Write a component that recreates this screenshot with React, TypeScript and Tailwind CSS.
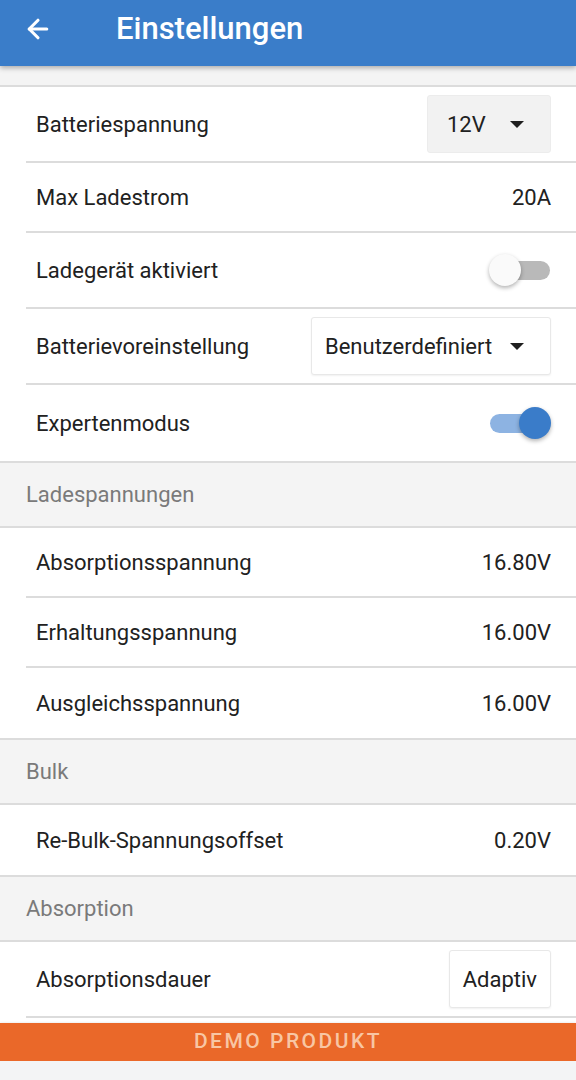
import { ArrowLeft } from 'lucide-react';

const font = { fontFamily: 'Roboto, "Noto Sans", sans-serif' };

function Caret() {
    return (
        <svg width="16" height="9" viewBox="0 0 16 9" className="ml-auto">
            <path d="M1 1h14L8 8z" fill="#1f1f1f" />
        </svg>
    );
}

function Toggle({ on }: { on: boolean }) {
    if (on) {
        return (
            <div className="relative w-[62px] h-[34px] flex items-center">
                <div className="w-[58px] h-[19px] rounded-full bg-[#8db3e2] ml-[1px]" />
                <div className="absolute right-0 top-[1px] w-[32px] h-[32px] rounded-full bg-[#3a7cc9] shadow-[0_2px_4px_rgba(0,0,0,0.3)]" />
            </div>
        );
    }
    return (
        <div className="relative w-[62px] h-[34px] flex items-center">
            <div className="w-[58px] h-[19px] rounded-full bg-[#b9b9b9] ml-[3px]" />
            <div className="absolute left-0 top-[1px] w-[32px] h-[32px] rounded-full bg-[#fafafa] shadow-[0_2px_4px_rgba(0,0,0,0.3)]" />
        </div>
    );
}

function Row({ label, children, tall, last }: { label: string; children: React.ReactNode; tall?: boolean; last?: boolean }) {
    return (
        <div className="bg-white shrink-0">
            <div
                className={`ml-[26px] pl-[10px] pr-[25px] flex items-center justify-between ${tall ? 'h-[76px]' : 'h-[70px]'} ${last ? '' : 'border-b-2 border-[#dcdcdc]'}`}
            >
                <span className="text-[22px] text-[#212121]">{label}</span>
                {children}
            </div>
        </div>
    );
}

function Section({ title }: { title: string }) {
    return (
        <div className="h-[67px] shrink-0 bg-[#f4f4f4] border-y-2 border-[#dcdcdc] flex items-center pl-[26px]">
            <span className="text-[22px] text-[#7a7a7a]">{title}</span>
        </div>
    );
}

function Value({ children }: { children: React.ReactNode }) {
    return <span className="text-[22px] text-[#212121]">{children}</span>;
}

export default function App() {
    return (
        <div style={font} className="w-[576px] h-[1080px] bg-white overflow-hidden flex flex-col relative">
            <div className="h-[66px] bg-[#3a7dc9] flex items-center pb-[8px] shrink-0 relative z-10 shadow-[0_2px_5px_rgba(0,0,0,0.3)]">
                <ArrowLeft size={30} strokeWidth={2.5} className="text-white ml-[23px]" />
                <h1 className="ml-[63px] text-[31px] font-medium text-white">Einstellungen</h1>
            </div>
            <div className="h-[21px] bg-[#f4f4f4] border-b-2 border-[#dcdcdc] shrink-0" />

            <Row label="Batteriespannung" tall>
                <div className="w-[124px] h-[58px] bg-[#f2f2f2] rounded-[3px] border border-[#ececec] flex items-center pl-[19px] pr-[25px]">
                    <span className="text-[22px] text-[#212121]">12V</span>
                    <Caret />
                </div>
            </Row>
            <Row label="Max Ladestrom">
                <Value>20A</Value>
            </Row>
            <Row label="Ladegerät aktiviert" tall>
                <Toggle on={false} />
            </Row>
            <Row label="Batterievoreinstellung" tall>
                <div className="w-[240px] h-[58px] bg-white rounded-[3px] border border-[#e8e8e8] shadow-[0_1px_2px_rgba(0,0,0,0.06)] flex items-center pl-[13px] pr-[25px]">
                    <span className="text-[22px] text-[#212121]">Benutzerdefiniert</span>
                    <Caret />
                </div>
            </Row>
            <Row label="Expertenmodus" tall last>
                <Toggle on />
            </Row>

            <Section title="Ladespannungen" />
            <Row label="Absorptionsspannung">
                <Value>16.80V</Value>
            </Row>
            <Row label="Erhaltungsspannung">
                <Value>16.00V</Value>
            </Row>
            <Row label="Ausgleichsspannung" last>
                <Value>16.00V</Value>
            </Row>

            <Section title="Bulk" />
            <Row label="Re-Bulk-Spannungsoffset" last>
                <Value>0.20V</Value>
            </Row>

            <Section title="Absorption" />
            <Row label="Absorptionsdauer" tall>
                <div className="h-[58px] px-[13px] bg-white rounded-[3px] border border-[#e8e8e8] shadow-[0_1px_2px_rgba(0,0,0,0.06)] flex items-center">
                    <span className="text-[22px] text-[#212121]">Adaptiv</span>
                </div>
            </Row>

            <div className="h-[5px] bg-white shrink-0" />
            <div className="h-[38px] bg-[#ea6829] flex items-center justify-center shrink-0 shadow-[0_1px_3px_rgba(0,0,0,0.25)]">
                <span className="text-[21px] tracking-[2.5px] text-[#f8c6a4] font-medium">DEMO PRODUKT</span>
            </div>
            <div className="flex-1 bg-[#f3f4f5]" />
        </div>
    );
}
